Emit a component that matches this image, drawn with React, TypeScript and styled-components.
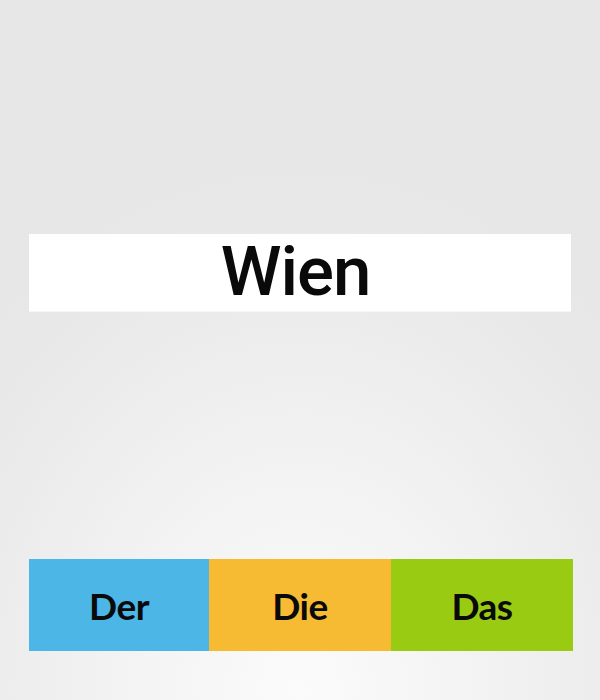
import React from "react";
import styled, { createGlobalStyle } from "styled-components";

const Global = createGlobalStyle`
  html, body { margin: 0; padding: 0; }
  body {
    background: #e8e8e8;
    font-family: "Liberation Sans", Arial, sans-serif;
  }
`;

const Screen = styled.div`
  width: 600px;
  height: 700px;
  box-sizing: border-box;
  padding: 234px 27px 0 29px;
  display: flex;
  flex-direction: column;
  background: radial-gradient(ellipse 430px 520px at 300px 690px, #fbfbfb 0%, #f2f2f2 45%, #e9e9e9 85%, #e7e7e7 100%);
`;

const WordBanner = styled.div`
  width: 542px;
  height: 77px;
  box-sizing: border-box;
  padding-right: 9px;
  background: #ffffff;
  display: flex;
  align-items: center;
  justify-content: center;
  box-shadow: 0 1px 0 rgba(255, 255, 255, 0.6);
`;

const Word = styled.span`
  font-family: Roboto, "Liberation Sans", sans-serif;
  font-weight: 500;
  font-size: 69px;
  letter-spacing: -1px;
  line-height: 1;
  color: #0a0a0a;
  transform: translateY(-1px);
`;

const ArticleRow = styled.div`
  margin-top: 248px;
  width: 544px;
  height: 92px;
  display: grid;
  grid-template-columns: 180px 182px 182px;
`;

const ArticleButton = styled.button<{ $bg: string }>`
  border: none;
  margin: 0;
  padding: 0;
  background: ${(p) => p.$bg};
  display: flex;
  align-items: center;
  justify-content: center;
  font-family: Lato, "Noto Sans", sans-serif;
  font-weight: 700;
  font-size: 37px;
  letter-spacing: -0.5px;
  color: #0a0a0a;
  cursor: pointer;
`;

export default function App() {
  return (
    <>
      <Global />
      <Screen>
        <WordBanner>
          <Word>Wien</Word>
        </WordBanner>
        <ArticleRow>
          <ArticleButton $bg="#4cb6e7">Der</ArticleButton>
          <ArticleButton $bg="#f6bb33">Die</ArticleButton>
          <ArticleButton $bg="#99cb13">Das</ArticleButton>
        </ArticleRow>
      </Screen>
    </>
  );
}
